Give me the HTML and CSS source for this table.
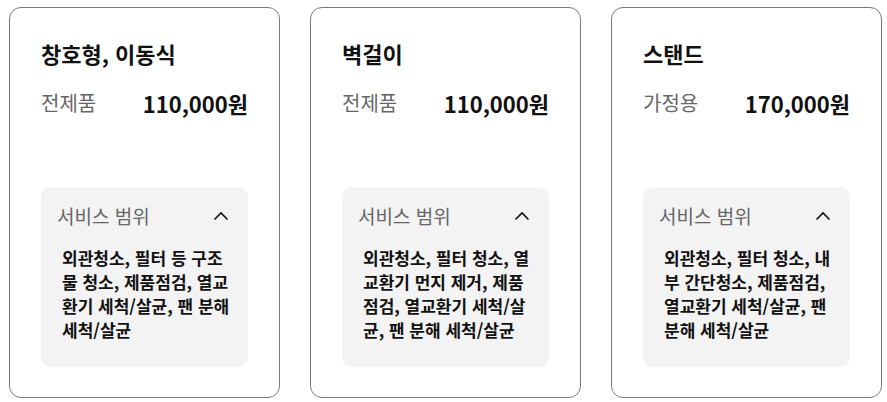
FILE: index.html
```html
<!DOCTYPE html>
<html lang="ko">
<head>
<meta charset="utf-8">
<link rel="stylesheet" href="styles.css">
</head>
<body>
<div class="cards">
  <div class="card">
    <div class="title">창호형, 이동식</div>
    <div class="price-row"><span class="label">전제품</span><span class="price">110,000원</span></div>
    <div class="scope">
      <div class="scope-head"><span>서비스 범위</span><svg class="chev" width="16" height="10" viewBox="0 0 16 10"><path d="M1.5 8.5 L8 2 L14.5 8.5" fill="none" stroke="#111" stroke-width="1.6"/></svg></div>
      <div class="scope-body">외관청소, 필터 등 구조<br>물 청소, 제품점검, 열교<br>환기 세척/살균, 팬 분해<br>세척/살균</div>
    </div>
  </div>
  <div class="card">
    <div class="title">벽걸이</div>
    <div class="price-row"><span class="label">전제품</span><span class="price">110,000원</span></div>
    <div class="scope">
      <div class="scope-head"><span>서비스 범위</span><svg class="chev" width="16" height="10" viewBox="0 0 16 10"><path d="M1.5 8.5 L8 2 L14.5 8.5" fill="none" stroke="#111" stroke-width="1.6"/></svg></div>
      <div class="scope-body">외관청소, 필터 청소, 열<br>교환기 먼지 제거, 제품<br>점검, 열교환기 세척/살<br>균, 팬 분해 세척/살균</div>
    </div>
  </div>
  <div class="card">
    <div class="title">스탠드</div>
    <div class="price-row"><span class="label">가정용</span><span class="price">170,000원</span></div>
    <div class="scope">
      <div class="scope-head"><span>서비스 범위</span><svg class="chev" width="16" height="10" viewBox="0 0 16 10"><path d="M1.5 8.5 L8 2 L14.5 8.5" fill="none" stroke="#111" stroke-width="1.6"/></svg></div>
      <div class="scope-body">외관청소, 필터 청소, 내<br>부 간단청소, 제품점검,<br>열교환기 세척/살균, 팬<br>분해 세척/살균</div>
    </div>
  </div>
</div>
</body>
</html>
```
FILE: styles.css
```css
* { box-sizing: border-box; }
html, body { margin: 0; padding: 0; background: #fff; }
body {
  font-family: "Noto Sans CJK KR", "Noto Sans", sans-serif;
  color: #111;
  padding: 7px 9px;
}
.cards {
  display: grid;
  grid-template-columns: 271px 271px 271px;
  column-gap: 30px;
}
.card {
  height: 391px;
  border: 1px solid #7a7a7a;
  border-radius: 12px;
  padding: 30px 31px 30px 31px;
  display: flex;
  flex-direction: column;
}
.title {
  font-size: 22px;
  font-weight: 700;
  line-height: 30px;
}
.price-row {
  margin-top: 20px;
  display: flex;
  justify-content: space-between;
  align-items: center;
  line-height: 30px;
}
.label {
  font-size: 20px;
  color: #666;
}
.price {
  font-size: 22px;
  font-weight: 700;
}
.scope {
  margin-top: auto;
  background: #f3f3f3;
  border-radius: 10px;
  padding: 15px 0 25px 0;
}
.scope-head {
  display: flex;
  justify-content: space-between;
  align-items: center;
  padding: 0 19px 0 16px;
  font-size: 19px;
  line-height: 28px;
  color: #666;
}
.scope-body {
  margin-top: 16px;
  padding: 0 8px 0 21px;
  font-size: 17px;
  font-weight: 700;
  line-height: 24px;
  color: #111;
  white-space: nowrap;
}
```
